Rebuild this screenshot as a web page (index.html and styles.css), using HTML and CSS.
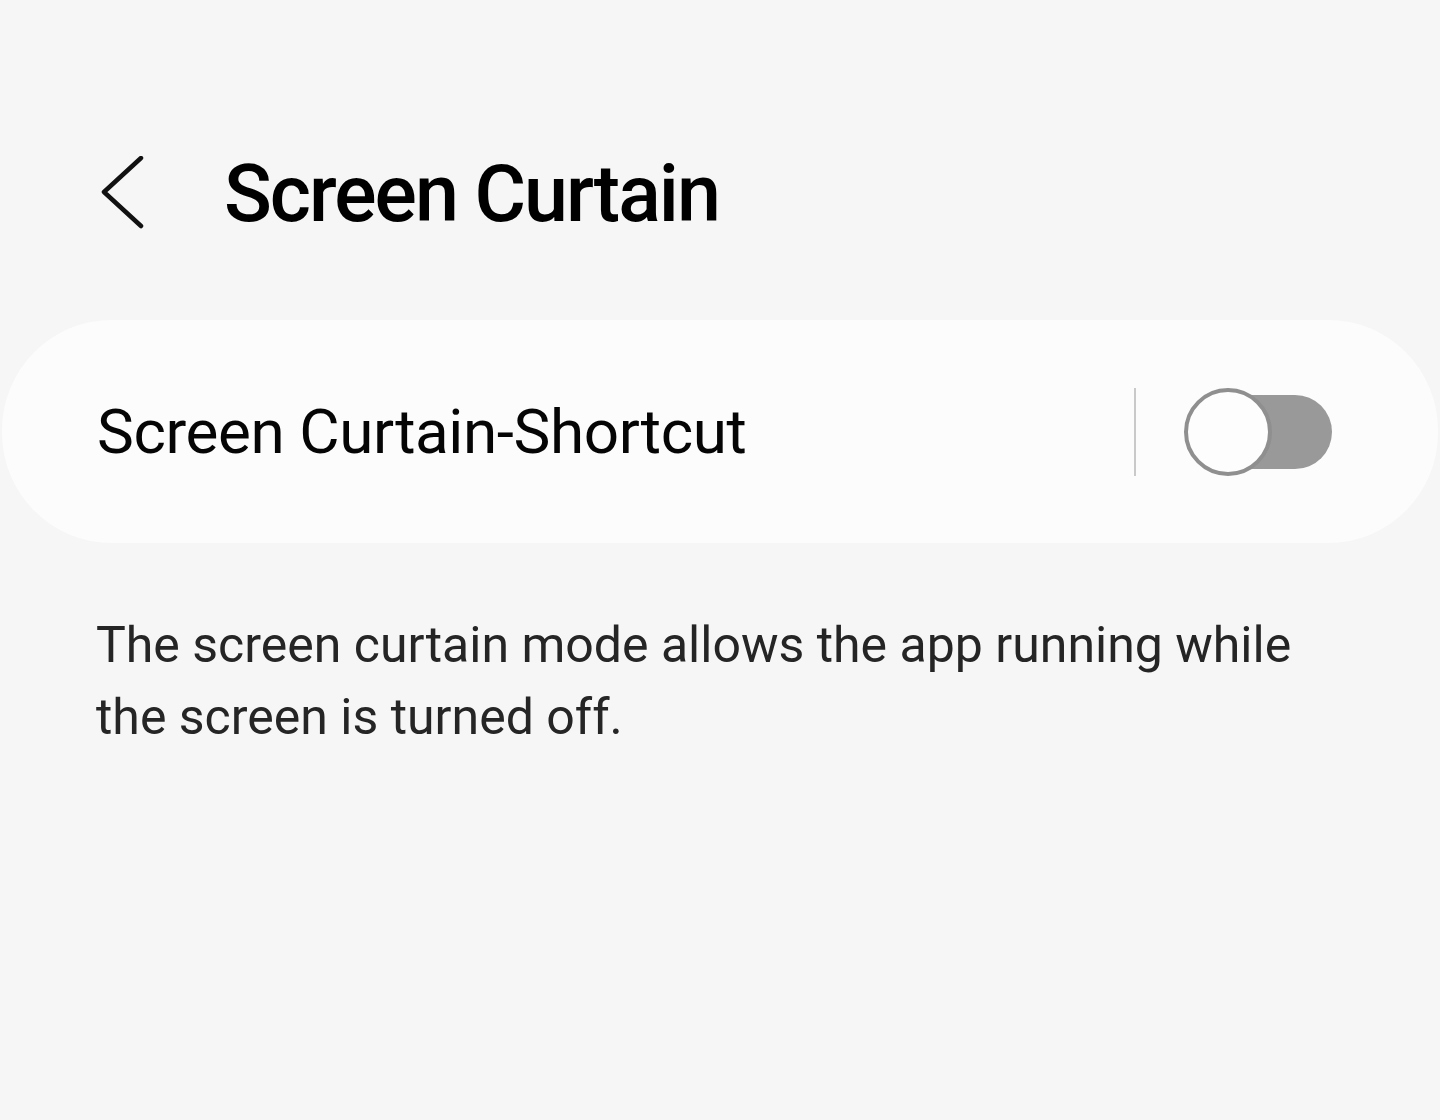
FILE: index.html
```html
<!DOCTYPE html>
<html lang="en">
<head>
<meta charset="UTF-8">
<meta name="viewport" content="width=device-width, initial-scale=1.0">
<title>Screen Curtain</title>
<link rel="stylesheet" href="styles.css">
</head>
<body>

    <div class="header">
        <a class="back-button" href="#" aria-label="Back">
            <svg width="52" height="76" viewBox="0 0 52 76">
                <polyline points="45,2 8,36 45,70" fill="none" stroke="#111" stroke-width="4.5" stroke-linecap="round" stroke-linejoin="round"/>
            </svg>
        </a>
        <h1>Screen Curtain</h1>
    </div>

    <div class="card">
        <span class="card-label">Screen Curtain-Shortcut</span>
        <div class="card-actions">
            <div class="divider"></div>
            <div class="switch">
                <div class="switch-track"></div>
                <div class="switch-thumb"></div>
            </div>
        </div>
    </div>

    <p class="description">The screen curtain mode allows the app running while the screen is turned off.</p>

</body>
</html>
```

FILE: styles.css
```css
body {
    font-family: Roboto, "Noto Sans", Arial, sans-serif;
    background-color: #f6f6f6;
    margin: 0;
    padding: 0;
    width: 1440px;
    height: 1120px;
    overflow: hidden;
}

.header {
    display: flex;
    align-items: center;
    padding: 154px 0 0 96px;
    height: 80px;
}

.back-button {
    display: flex;
    width: 52px;
    height: 76px;
}

.header h1 {
    margin: 0 0 0 76px;
    font-size: 79px;
    font-weight: 500;
    color: #000;
    letter-spacing: -2px;
}

.card {
    display: flex;
    align-items: center;
    justify-content: space-between;
    margin: 86px 2px 0 2px;
    height: 223px;
    padding: 0 106px 0 95px;
    background-color: #fcfcfc;
    border-radius: 110px;
}

.card-label {
    font-size: 62px;
    letter-spacing: -0.4px;
    color: #050505;
}

.card-actions {
    display: flex;
    align-items: center;
}

.divider {
    width: 2px;
    height: 88px;
    background-color: #c9c9c9;
    margin-right: 48px;
}

.switch {
    position: relative;
    width: 148px;
    height: 88px;
}

.switch-track {
    position: absolute;
    left: 2px;
    right: 0;
    top: 7px;
    height: 74px;
    border-radius: 37px;
    background-color: #999;
}

.switch-thumb {
    position: absolute;
    left: 0;
    top: 0;
    width: 80px;
    height: 80px;
    border: 4px solid #8f8f8f;
    border-radius: 50%;
    background-color: #fdfdfd;
}

.description {
    margin: 66px 110px 0 96px;
    font-size: 50px;
    line-height: 72px;
    color: #252525;
}
```
